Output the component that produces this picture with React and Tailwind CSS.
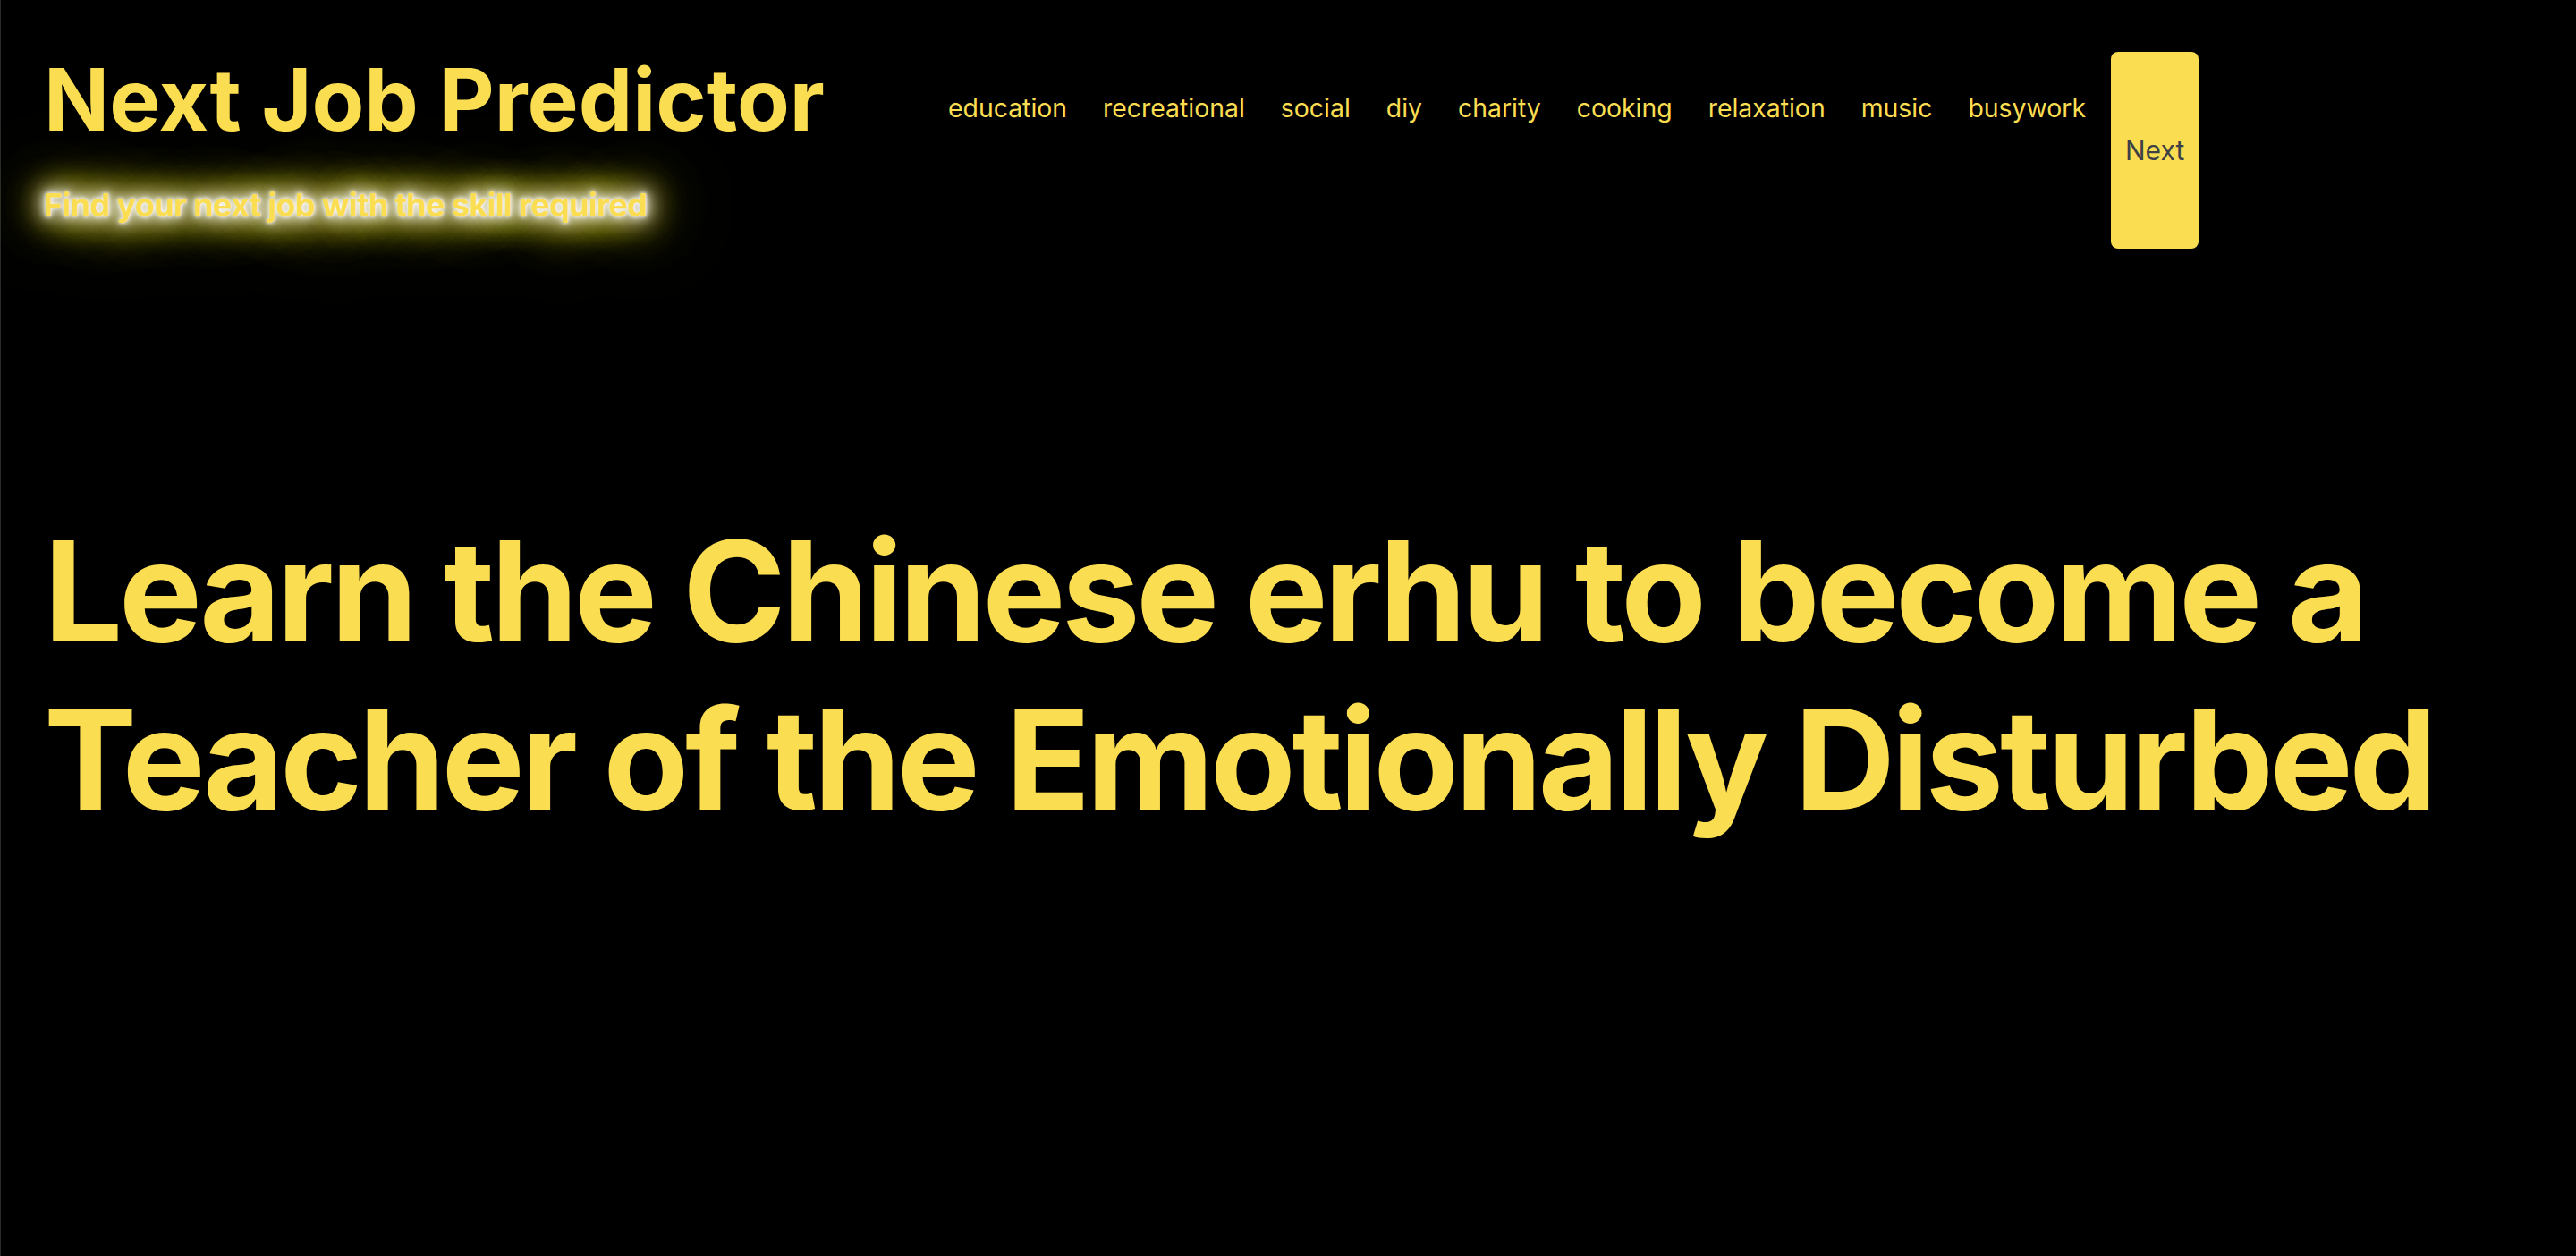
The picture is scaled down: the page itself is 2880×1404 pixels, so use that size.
const categories = [
  "education",
  "recreational",
  "social",
  "diy",
  "charity",
  "cooking",
  "relaxation",
  "music",
  "busywork",
]

export default function App() {
  return (
    <div
      className="min-h-screen border-l border-[#2a2a2a] bg-black px-12 pt-[58px] text-[#fbdd52]"
      style={{ fontFamily: "Inter, 'Liberation Sans', sans-serif" }}
    >
      <header className="flex items-stretch">
        <div className="flex flex-col">
          <h1 className="text-8xl font-bold leading-[106px]">Next Job Predictor</h1>
          <p className="mt-[45px] mb-[29px] text-4xl font-bold tracking-[-0.6px] [text-shadow:0_0_4px_#fff,0_0_10px_#fff,0_0_20px_#fff,0_0_28px_#fff,0_0_36px_#fde047,0_0_48px_#fde047,0_0_60px_#fde047,0_0_80px_#fde047,0_0_100px_#fde047]">
            Find your next job with the skill required
          </p>
        </div>
        <nav className="ml-[138px] mt-[45px]">
          <ul className="flex gap-10 text-[28.4px] leading-9">
            {categories.map((c) => (
              <li key={c}>
                <a href="#">{c}</a>
              </li>
            ))}
          </ul>
        </nav>
        <button className="ml-[28px] rounded-lg bg-[#fbdd52] px-4 text-3xl text-[#3f3f46]">Next</button>
      </header>
      <main>
        <h2 className="mt-[289px] max-w-[2700px] text-[156px] font-bold leading-[188px] tracking-[-0.027em]">
          Learn the Chinese erhu to become a Teacher of the Emotionally Disturbed
        </h2>
      </main>
    </div>
  )
}
